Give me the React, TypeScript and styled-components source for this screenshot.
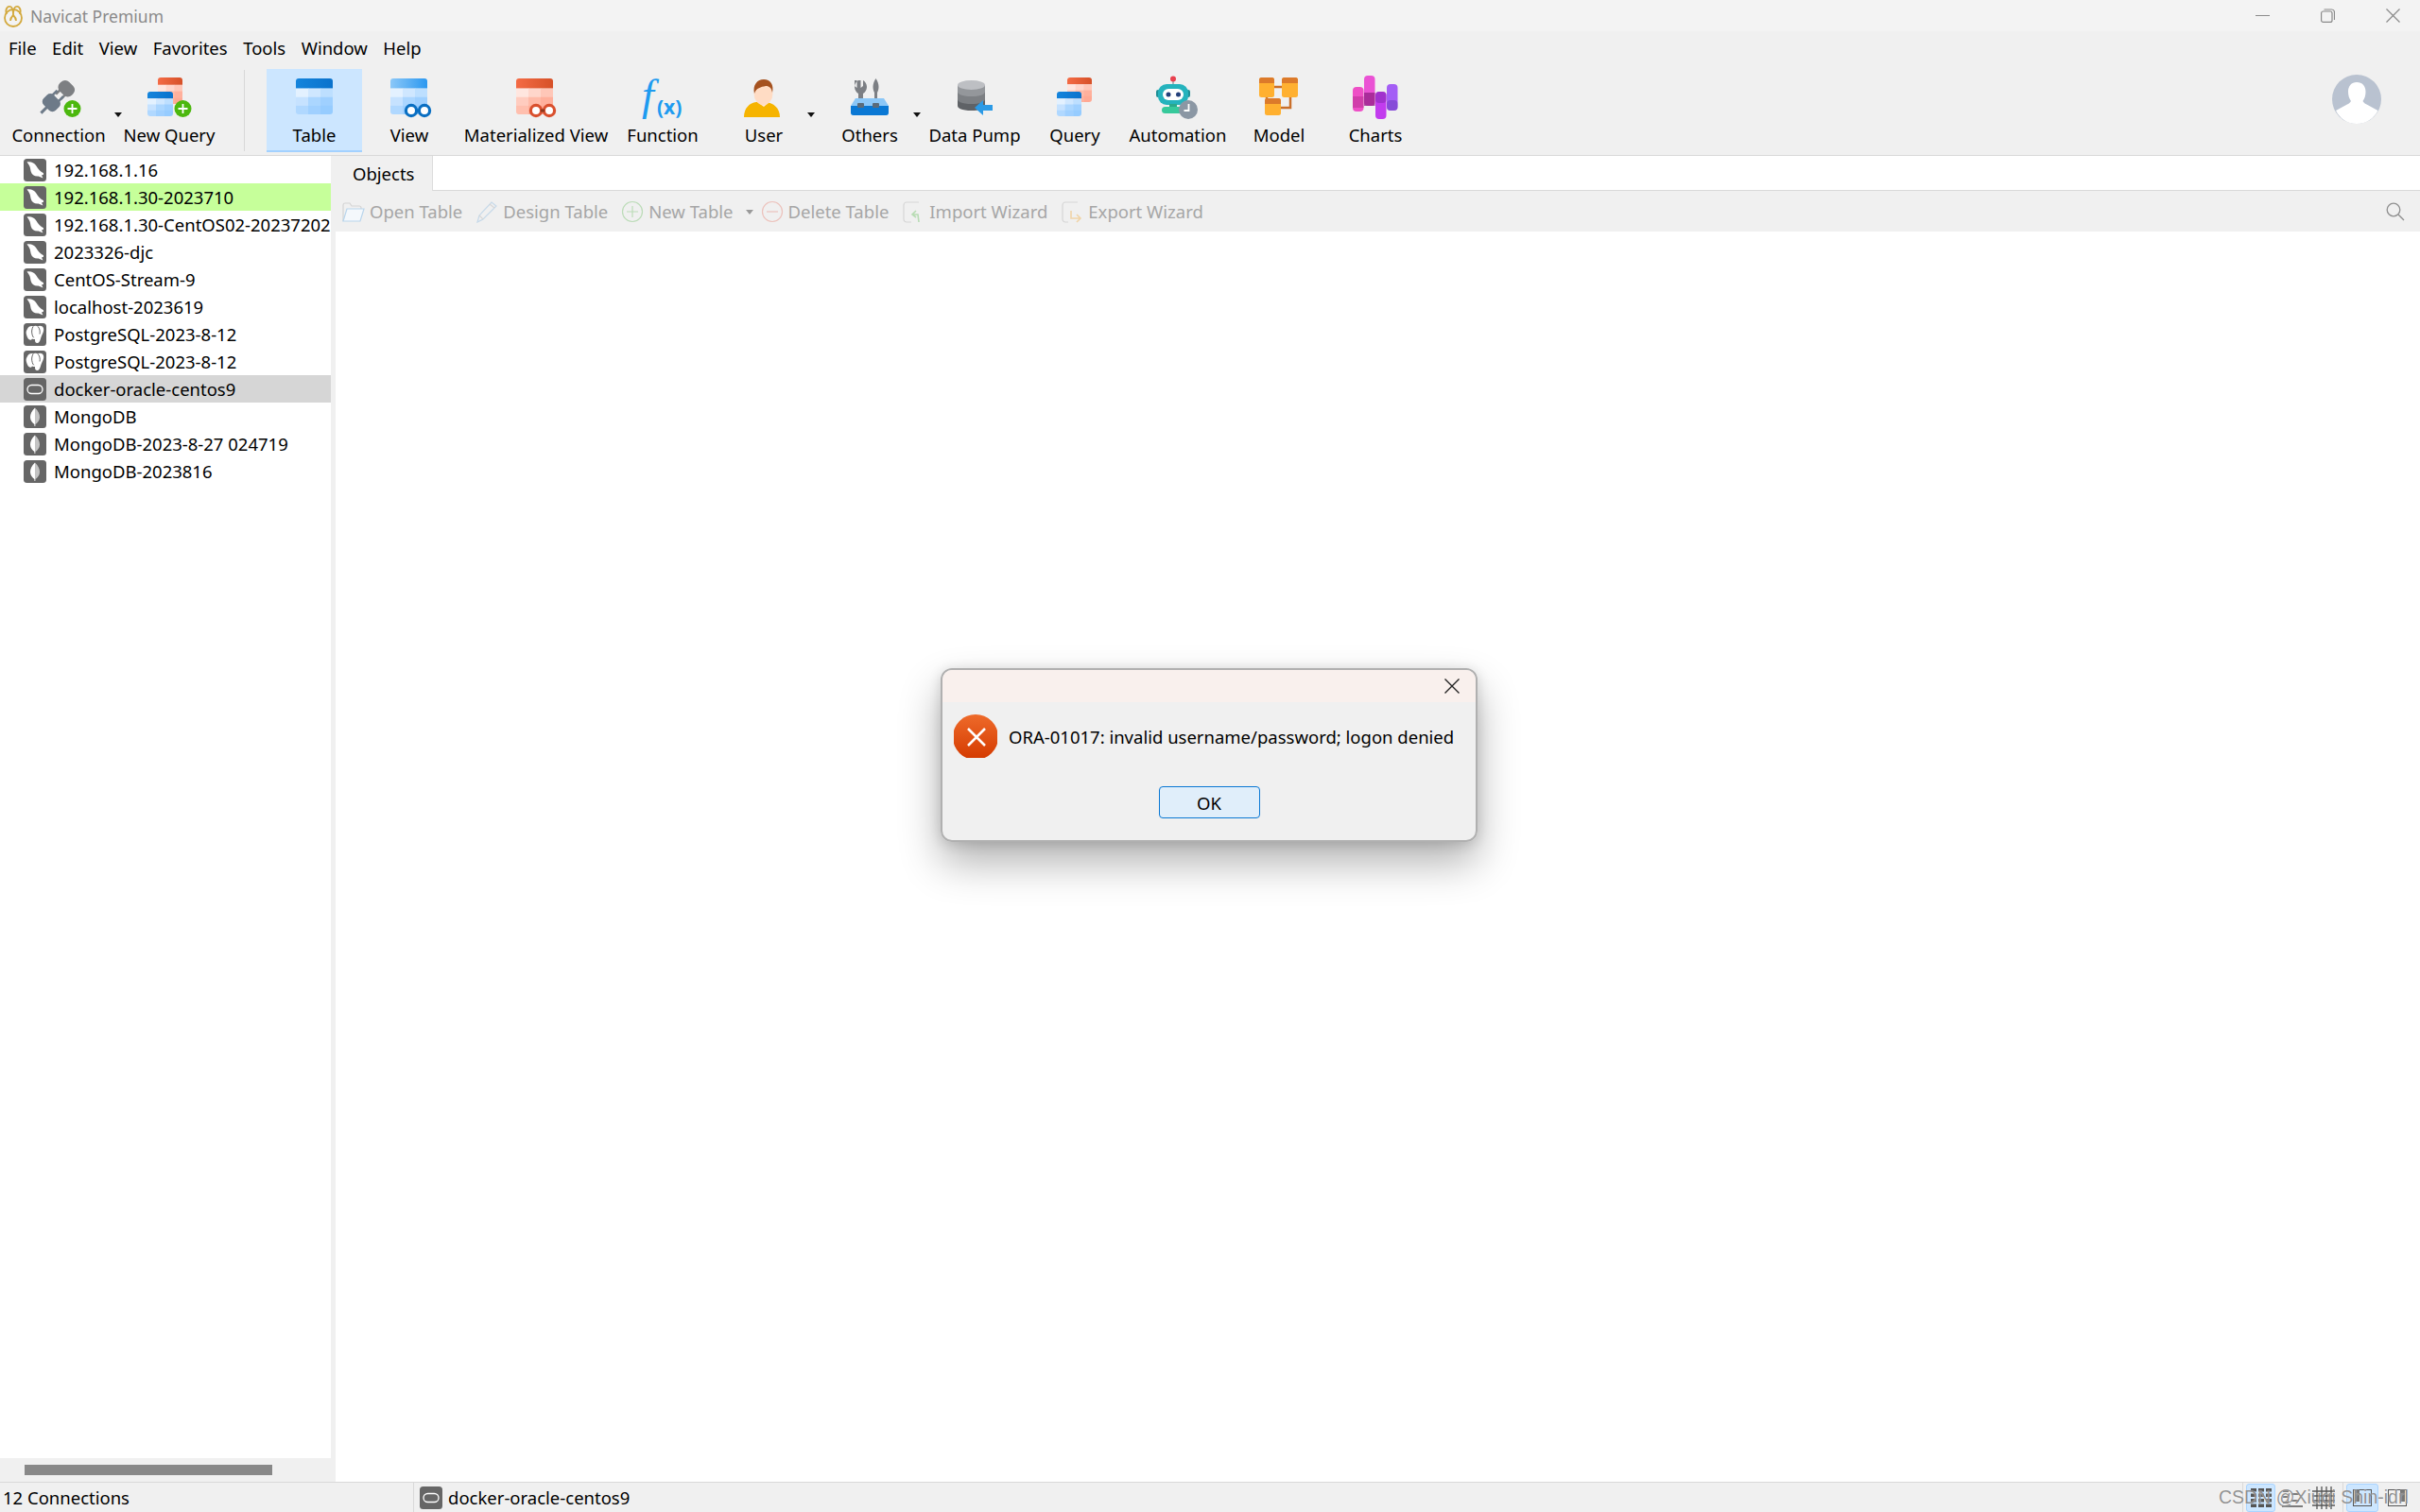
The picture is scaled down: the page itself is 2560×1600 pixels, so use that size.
import React, { useId } from 'react'
import styled, { createGlobalStyle } from 'styled-components'

const GlobalStyle = createGlobalStyle`
    html, body {
        margin: 0;
        padding: 0;
        background: #fff;
    }
    * {
        box-sizing: border-box;
    }
`

const Page = styled.div`
    position: relative;
    width: 2560px;
    height: 1600px;
    display: flex;
    flex-direction: column;
    overflow: hidden;
    background: #f0f0f0;
    color: #000;
    font-family: "Noto Sans", "Open Sans", sans-serif;
    font-size: 18.5px;
`

const TitleBar = styled.div`
    height: 33px;
    flex: none;
    display: flex;
    align-items: center;
    background: #f3f3f3;
    padding-left: 3px;
`

const AppTitle = styled.span`
    margin-left: 7px;
    color: #8a8a8a;
    font-size: 17.5px;
`

const WindowControls = styled.div`
    margin-left: auto;
    display: flex;
    align-items: center;
    padding-right: 21px;
    gap: 54px;
    svg {
        display: block;
    }
`

const MenuBar = styled.div`
    height: 35px;
    flex: none;
    display: flex;
    align-items: center;
    gap: 16.5px;
    padding-left: 9px;
`

const Toolbar = styled.div`
    height: 97px;
    flex: none;
    display: flex;
    align-items: flex-start;
    padding: 5px 0 0 8px;
    border-bottom: 1px solid #d9d9d9;
`

const ToolItem = styled.div<{ $w: number; $active?: boolean }>`
    position: relative;
    width: ${(p) => p.$w}px;
    height: 88px;
    flex: none;
    display: flex;
    flex-direction: column;
    align-items: center;
    padding-top: 7px;
    background: ${(p) => (p.$active ? '#cce6ff' : 'transparent')};
    border-bottom: 2px solid ${(p) => (p.$active ? '#a3d1ff' : 'transparent')};
    svg {
        display: block;
        flex: none;
    }
`

const ToolLabel = styled.span`
    margin-top: 3px;
    line-height: 24px;
    white-space: nowrap;
`

const ToolCaret = styled.i<{ $right: number }>`
    position: absolute;
    right: ${(p) => p.$right}px;
    top: 46px;
    width: 0;
    height: 0;
    border-left: 4px solid transparent;
    border-right: 4px solid transparent;
    border-top: 5px solid #111;
`

const ToolSeparator = styled.div`
    width: 1px;
    height: 86px;
    flex: none;
    margin: 1px 23px 0 16px;
    background: #d8d8d8;
`

const Avatar = styled.div`
    margin-left: auto;
    margin-right: 40px;
    margin-top: 5px;
    svg {
        display: block;
    }
`

const Body = styled.div`
    flex: 1;
    min-height: 0;
    display: flex;
`

const Sidebar = styled.div`
    width: 350px;
    flex: none;
    display: flex;
    flex-direction: column;
    background: #fff;
`

const ConnectionList = styled.div`
    flex: 1;
    min-height: 0;
    overflow: hidden;
`

const ConnectionRow = styled.div<{ $bg?: string }>`
    height: 29px;
    display: flex;
    align-items: center;
    gap: 8px;
    padding-left: 25px;
    white-space: nowrap;
    overflow: hidden;
    background: ${(p) => p.$bg || 'transparent'};
    svg {
        display: block;
        flex: none;
    }
`

const ScrollTrack = styled.div`
    height: 25px;
    flex: none;
    padding: 7px 0 0 26px;
    background: #f0f0f0;
`

const ScrollThumb = styled.div`
    width: 262px;
    height: 11px;
    background: #888;
`

const Main = styled.div`
    flex: 1;
    min-width: 0;
    display: flex;
    flex-direction: column;
    margin-left: 5px;
    background: #fff;
`

const TabRow = styled.div`
    height: 37px;
    flex: none;
    display: flex;
    border-bottom: 1px solid #d9d9d9;
    margin-left: -5px;
`

const Tab = styled.div`
    width: 108px;
    display: flex;
    align-items: center;
    padding-left: 23px;
    background: #f0f0f0;
    border-right: 1px solid #dcdcdc;
    margin-bottom: -1px;
`

const ActionBar = styled.div`
    height: 43px;
    flex: none;
    display: flex;
    align-items: center;
    gap: 14px;
    padding: 0 16px 0 7px;
    background: #f0f0f0;
    color: #a6a6a6;
    margin-left: 0;
`

const ActionButton = styled.div`
    display: flex;
    align-items: center;
    gap: 5px;
    white-space: nowrap;
    svg {
        display: block;
        flex: none;
    }
`

const ActionCaret = styled.i`
    width: 0;
    height: 0;
    margin: 2px -6px 0 8px;
    border-left: 4px solid transparent;
    border-right: 4px solid transparent;
    border-top: 5px solid #9a9a9a;
`

const SearchButton = styled.div`
    margin-left: auto;
    svg {
        display: block;
    }
`

const Content = styled.div`
    flex: 1;
    background: #fff;
`

const StatusBar = styled.div`
    height: 32px;
    flex: none;
    display: flex;
    align-items: center;
    border-top: 1px solid #d9d9d9;
    background: #f0f0f0;
    padding-left: 3px;
`

const StatusCount = styled.div`
    width: 434px;
    flex: none;
`

const StatusConnection = styled.div`
    height: 100%;
    display: flex;
    align-items: center;
    gap: 6px;
    padding-left: 6px;
    border-left: 1px solid #d9d9d9;
    svg {
        display: block;
    }
`

const ViewSwitch = styled.div`
    height: 100%;
    margin-left: auto;
    display: flex;
    align-items: center;
    padding-right: 4px;
`

const SwitchGroup = styled.div`
    height: 100%;
    display: flex;
    align-items: center;
    gap: 5px;
    padding: 0 5px 0 3px;
    border-left: 1px solid #d9d9d9;
`

const SwitchButton = styled.div<{ $active?: boolean; $w: number }>`
    width: ${(p) => p.$w}px;
    height: 30px;
    display: flex;
    align-items: center;
    justify-content: center;
    border-radius: 3px;
    background: ${(p) => (p.$active ? '#cce6ff' : 'transparent')};
    border: 1px solid ${(p) => (p.$active ? '#a9d4ff' : 'transparent')};
    svg {
        display: block;
    }
`

const Watermark = styled.div`
    position: absolute;
    left: 2347px;
    top: 1572px;
    color: rgba(110, 110, 110, 0.75);
    font-family: "Liberation Sans", Arial, sans-serif;
    font-size: 19.5px;
    line-height: 24px;
    white-space: nowrap;
    text-shadow: 0 0 1px rgba(255, 255, 255, 0.8);
`

const Dialog = styled.div`
    position: absolute;
    left: 995px;
    top: 707px;
    width: 568px;
    height: 184px;
    display: flex;
    flex-direction: column;
    background: #f0f0f0;
    border: 2px solid #b0b0b0;
    border-radius: 12px;
    overflow: hidden;
`

const DialogShadow = styled.div`
    position: absolute;
    left: 995px;
    top: 707px;
    width: 568px;
    height: 184px;
    border-radius: 12px;
    box-shadow: 0 22px 44px rgba(0, 0, 0, 0.3), 0 2px 14px rgba(0, 0, 0, 0.14);
`

const DialogHeader = styled.div`
    height: 34px;
    flex: none;
    display: flex;
    justify-content: flex-end;
    align-items: center;
    padding-right: 17px;
    background: #f9f0ed;
    svg {
        display: block;
    }
`

const DialogMessage = styled.div`
    display: flex;
    align-items: center;
    gap: 12px;
    margin-top: 13px;
    padding-left: 12px;
    white-space: nowrap;
    font-size: 18.5px;
    svg {
        display: block;
        flex: none;
    }
`

const DialogFooter = styled.div`
    display: flex;
    justify-content: center;
    margin-top: 30px;
`

const OkButton = styled.div`
    width: 107px;
    height: 34px;
    display: flex;
    align-items: center;
    justify-content: center;
    border: 1.5px solid #0a78d4;
    border-radius: 4px;
    background: #e0eefa;
`

type GridProps = { x: number; y: number; w: number; h: number; kind: 'blue' | 'red' | 'sky' }

const gridColors = {
    blue: {
        head: ['#1484dc', '#0a72cc'],
        cells: ['#e3f1ff', '#cfe7ff', '#bddfff', '#c6e2ff', '#abd6ff', '#9fd0ff', '#b0d8ff', '#a0d0ff', '#96ccff'],
    },
    sky: {
        head: ['#8cc8f8', '#2b98f0'],
        cells: ['#e3f1ff', '#cfe7ff', '#bddfff', '#c6e2ff', '#abd6ff', '#9fd0ff', '#b0d8ff', '#a0d0ff', '#96ccff'],
    },
    red: {
        head: ['#f46b45', '#d65128'],
        cells: ['#ffe6df', '#ffd6cb', '#ffc7b8', '#ffccbf', '#ffbaa8', '#ffb09c', '#ffbfae', '#ffb19d', '#ffa994'],
    },
}

const Grid = ({ x, y, w, h, kind }: GridProps) => {
    const id = useId()
    const c = gridColors[kind]
    const headH = h * 0.28
    const cellW = w / 3
    const cellH = (h - headH) / 3
    return (
        <g>
            <defs>
                <clipPath id={id + 'c'}>
                    <rect x={x} y={y} width={w} height={h} rx={3} />
                </clipPath>
                <linearGradient id={id + 'g'} x1="0" y1="0" x2="1" y2="0">
                    <stop offset="0" stopColor={c.head[0]} />
                    <stop offset="1" stopColor={c.head[1]} />
                </linearGradient>
            </defs>
            <g clipPath={`url(#${id}c)`}>
                <rect x={x} y={y} width={w} height={headH} fill={`url(#${id}g)`} />
                {c.cells.map((fill, i) => (
                    <rect
                        key={i}
                        x={x + (i % 3) * cellW}
                        y={y + headH + Math.floor(i / 3) * cellH}
                        width={cellW + 0.5}
                        height={cellH + 0.5}
                        fill={fill}
                    />
                ))}
            </g>
        </g>
    )
}

const Icon48 = ({ children }: { children: React.ReactNode }) => (
    <svg width="48" height="48" viewBox="0 0 48 48">
        {children}
    </svg>
)

const GreenPlus = () => (
    <g>
        <circle cx="38.5" cy="35" r="9" fill="#4cb80e" />
        <path d="M38.5 30v10M33.5 35h10" stroke="#fff" strokeWidth="1.8" />
    </g>
)

const ConnectionIcon = () => (
    <Icon48>
        <g transform="rotate(45 33 13)">
            <rect x="24" y="7" width="18" height="14" rx="6" fill="#7d7f82" />
            <rect x="28" y="20" width="2.5" height="6" fill="#7d7f82" />
            <rect x="35.5" y="20" width="2.5" height="6" fill="#7d7f82" />
        </g>
        <g transform="rotate(45 16 29)">
            <rect x="7" y="21" width="18" height="15" rx="5" fill="#6d7a88" />
            <rect x="10" y="15" width="2.5" height="7" fill="#6d7a88" />
            <rect x="19" y="15" width="2.5" height="7" fill="#6d7a88" />
            <rect x="14.5" y="35" width="3" height="9" fill="#6d7a88" />
        </g>
        <GreenPlus />
    </Icon48>
)

const NewQueryIcon = () => (
    <Icon48>
        <Grid x={12} y={2} w={26} h={28} kind="red" />
        <Grid x={1} y={17} w={27} h={26} kind="blue" />
        <GreenPlus />
    </Icon48>
)

const TableIcon = () => (
    <Icon48>
        <Grid x={4} y={3} w={39} h={38} kind="blue" />
    </Icon48>
)

const ViewIcon = () => (
    <Icon48>
        <Grid x={4} y={3} w={39} h={38} kind="sky" />
        <g fill="#fff" stroke="#0a6fc2" strokeWidth="3.2">
            <circle cx="26" cy="37" r="5.6" />
            <circle cx="40" cy="37" r="5.6" />
        </g>
        <path d="M31 37h4" stroke="#0a6fc2" strokeWidth="3" />
    </Icon48>
)

const MaterializedIcon = () => (
    <Icon48>
        <Grid x={3} y={3} w={39} h={38} kind="red" />
        <g fill="#fff" stroke="#d9502e" strokeWidth="3.2">
            <circle cx="24" cy="37" r="5.6" />
            <circle cx="38" cy="37" r="5.6" />
        </g>
        <path d="M29 37h4" stroke="#8a3a20" strokeWidth="3" />
    </Icon48>
)

const FunctionIcon = () => (
    <Icon48>
        <text x="2" y="36" fill="#1e9bf0" fontFamily="'Liberation Serif', serif" fontStyle="italic" fontSize="46">
            f
        </text>
        <text x="18" y="41" fill="#1e9bf0" fontFamily="'Noto Sans', sans-serif" fontWeight="700" fontSize="21">
            (x)
        </text>
    </Icon48>
)

const UserIcon = () => (
    <Icon48>
        <path d="M3 44c0-10 6-15 13-16h10c8 1 15 6 15 16z" fill="#f6b400" />
        <path d="M17 28l7 5 6-5-2-3h-9z" fill="#ffe7d6" />
        <ellipse cx="23.5" cy="19" rx="10" ry="12" fill="#ffdcc4" />
        <path d="M14 19c-2-9 3-15 10-15s11 6 9 14c-1-5-3-7-7-7-5 1-10 2-12 8z" fill="#a5521f" />
    </Icon48>
)

const OthersIcon = () => (
    <Icon48>
        <path
            d="M8 5v6l2.5 2v-8h4v8l2.500-2V5c2 1 4 4 4 7 0 3-2 6-4 7v12h-5V19c-2-1-4-4-4-7 0-3 2-6 4-7z"
            fill="#7c7f84"
        />
        <path d="M30.500 3c2 3 3 6 3 9 0 3-1 5-1.500 6v13h-3V18c-.5-1-1.500-3-1.500-6 0-3 1-6 3-9z" fill="#7c7f84" />
        <path d="M9 24h30l5 8v7a3 3 0 0 1-3 3H7a3 3 0 0 1-3-3v-7z" fill="#8cc7f7" />
        <path d="M4 32h40v7a3 3 0 0 1-3 3H7a3 3 0 0 1-3-3z" fill="#0a78d4" />
        <rect x="11" y="29" width="7" height="5" rx="1" fill="#5b6b7a" />
        <rect x="27" y="29" width="7" height="5" rx="1" fill="#5b6b7a" />
    </Icon48>
)

const DataPumpIcon = () => (
    <Icon48>
        <path d="M6 10v22c0 3 6 5 14.500 5S35 35 35 32V10z" fill="#5f6266" />
        <path d="M6 10v15c0 3 6 5 14.500 5S35 28 35 25V10z" fill="#7c7f83" />
        <path d="M6 10v7c0 3 6 5 14.500 5S35 20 35 17v-7z" fill="#94979b" />
        <ellipse cx="20.500" cy="10" rx="14.500" ry="5" fill="#bdbfc3" />
        <path d="M24 34l9-8v5h10v6H33v5z" fill="#2b9ae6" />
    </Icon48>
)

const QueryIcon = () => (
    <Icon48>
        <Grid x={16} y={2} w={26} h={26} kind="red" />
        <Grid x={5} y={17} w={26} h={26} kind="blue" />
    </Icon48>
)

const AutomationIcon = () => (
    <Icon48>
        <path d="M19 4v6" stroke="#9aa3ad" strokeWidth="1.500" />
        <circle cx="19" cy="3.500" r="3" fill="#e8414f" />
        <rect x="1" y="15" width="4" height="8" rx="2" fill="#1f8f96" />
        <rect x="33" y="15" width="4" height="8" rx="2" fill="#1f8f96" />
        <rect x="3" y="9" width="32" height="22" rx="9" fill="#25b3bd" />
        <rect x="8" y="14" width="22" height="12" rx="6" fill="#fff" />
        <circle cx="14" cy="20" r="2.500" fill="#24407a" />
        <circle cx="24.500" cy="20" r="2.500" fill="#24407a" />
        <rect x="15" y="30" width="8" height="4" fill="#2aa98b" />
        <rect x="7" y="33" width="24" height="7" rx="3.500" fill="#37c99b" />
        <circle cx="35" cy="36" r="10" fill="#8b97a4" />
        <path d="M35.500 30v7h-5" fill="none" stroke="#fff" strokeWidth="1.800" />
    </Icon48>
)

const ModelIcon = () => (
    <Icon48>
        <path d="M19 12h8M11 23v2M36 23v11H26" fill="none" stroke="#c96f2a" strokeWidth="2.500" />
        {[
            [3, 2, 16, 21],
            [27, 2, 17, 21],
            [9, 24, 17, 18],
        ].map(([x, y, w, h]) => (
            <g key={x}>
                <rect x={x} y={y} width={w} height={h} rx={2.500} fill="#ffb030" />
                <path
                    d={`M${x} ${y + 6}v-3.500a2.500 2.500 0 0 1 2.500-2.500h${w - 5}a2.500 2.500 0 0 1 2.500 2.500v3.500z`}
                    fill="#dc7a2a"
                />
            </g>
        ))}
    </Icon48>
)

const ChartsIcon = () => (
    <Icon48>
        <rect x="0" y="12" width="11.500" height="26" rx="4" fill="#ee4fc6" />
        <rect x="12" y="0" width="11.500" height="32" rx="4" fill="#ea52d4" />
        <rect x="24" y="17" width="11.500" height="29" rx="4" fill="#c23cee" />
        <rect x="36" y="9" width="11.500" height="28" rx="4" fill="#a45ef5" />
        <rect x="0" y="22" width="11.500" height="12" fill="#b92f94" opacity="0.55" />
        <rect x="12" y="18" width="11.500" height="14" fill="#8f1d82" opacity="0.7" />
        <rect x="24" y="17" width="11.500" height="12" rx="4" fill="#8a2bb8" opacity="0.6" />
        <rect x="36" y="26" width="11.500" height="11" rx="4" fill="#6f3cc0" opacity="0.55" />
    </Icon48>
)

const ToolIconBox = styled.div`
    height: 48px;
    flex: none;
`

type DbKind = 'mysql' | 'postgres' | 'oracle' | 'mongo'

const DbIcon = ({ kind }: { kind: DbKind }) => (
    <svg width="24" height="24" viewBox="0 0 24 24">
        <rect width="24" height="24" rx="3.500" fill="#666" />
        {kind === 'mysql' && (
            <path
                d="M3.500 3.500C8 2.800 11.500 4.600 13.500 7.800c1.800 3 4 5.800 7.500 7.500v1.500l-2 .6 1.500 3.200-4.800-2.200c-4 .4-7-1.300-8-5-.6-2.200-.5-4.400-1.700-6.200C5.300 5.600 4.500 4.800 3.500 3.500z"
                fill="#fff"
            />
        )}
        {kind === 'postgres' && (
            <g>
                <path
                    d="M4 6c1-2.500 3.500-3.500 6-2.800C11.500 2.500 13.500 2.500 15 3.200c2-1 5-.6 6 2 .8 2.500-.5 5-1.500 7-.8 1.500-1 3-1.800 5-.5 1.500-1.500 4-3.700 3.800-1.800-.2-2-2-2-4-1 .2-2 0-3-.6-.5 1-1.500 1.600-2.800 1.200-2-1-3-4.500-3.500-6.600C2.300 8.500 3.400 7.200 4 6z"
                    fill="#fff"
                />
                <path d="M10 3.500c-1.500 3-1.800 6-.8 9 .3 1 .6 2 1.500 2.800M15 3.500c2 2 2.600 5 2 8" fill="none" stroke="#666" strokeWidth="1" />
            </g>
        )}
        {kind === 'oracle' && <rect x="4" y="7.500" width="16" height="9" rx="4.500" fill="none" stroke="#fff" strokeWidth="1.300" />}
        {kind === 'mongo' && (
            <g>
                <path d="M12 2.500C8.500 6 7 9 7 12.500s2.500 6 4.400 7.500l.1 2h.5z" fill="#fff" />
                <path d="M12 2.500c3.500 3.500 5 6.500 5 10s-2.500 6-4.400 7.500l-.1 2H12z" fill="#c4c4c4" />
            </g>
        )}
    </svg>
)

const connections: { name: string; kind: DbKind; bg?: string }[] = [
    { name: '192.168.1.16', kind: 'mysql' },
    { name: '192.168.1.30-2023710', kind: 'mysql', bg: '#c6ff9a' },
    { name: '192.168.1.30-CentOS02-20237202', kind: 'mysql' },
    { name: '2023326-djc', kind: 'mysql' },
    { name: 'CentOS-Stream-9', kind: 'mysql' },
    { name: 'localhost-2023619', kind: 'mysql' },
    { name: 'PostgreSQL-2023-8-12', kind: 'postgres' },
    { name: 'PostgreSQL-2023-8-12', kind: 'postgres' },
    { name: 'docker-oracle-centos9', kind: 'oracle', bg: '#d6d6d6' },
    { name: 'MongoDB', kind: 'mongo' },
    { name: 'MongoDB-2023-8-27 024719', kind: 'mongo' },
    { name: 'MongoDB-2023816', kind: 'mongo' },
]

const tools: { label: string; w: number; icon: React.ReactNode; caret?: number; active?: boolean }[] = [
    { label: 'Table', w: 101, icon: <TableIcon />, active: true },
    { label: 'View', w: 100, icon: <ViewIcon /> },
    { label: 'Materialized View', w: 168, icon: <MaterializedIcon /> },
    { label: 'Function', w: 100, icon: <FunctionIcon /> },
    { label: 'User', w: 114, icon: <UserIcon />, caret: 3 },
    { label: 'Others', w: 110, icon: <OthersIcon />, caret: 1 },
    { label: 'Data Pump', w: 112, icon: <DataPumpIcon /> },
    { label: 'Query', w: 100, icon: <QueryIcon /> },
    { label: 'Automation', w: 118, icon: <AutomationIcon /> },
    { label: 'Model', w: 96, icon: <ModelIcon /> },
    { label: 'Charts', w: 108, icon: <ChartsIcon /> },
]

const ActionIcon = ({ children }: { children: React.ReactNode }) => (
    <svg width="24" height="24" viewBox="0 0 24 24" fill="none" strokeWidth="1.200">
        {children}
    </svg>
)

const actions: { label: string; icon: React.ReactNode; caret?: boolean }[] = [
    {
        label: 'Open Table',
        icon: (
            <ActionIcon>
                <path d="M1 22V5a2 2 0 0 1 2-2h5l2 3h8a2 2 0 0 1 2 2v1" stroke="#d4d4d4" />
                <path d="M1 22l4-13h18l-4 13z" stroke="#b9d5ec" fill="#f4f8fc" />
            </ActionIcon>
        ),
    },
    {
        label: 'Design Table',
        icon: (
            <ActionIcon>
                <path d="M2 23l2-7L17 2l5 4L8 20z" stroke="#c6d9e9" />
                <path d="M4 16l4 4M15 4l5 4" stroke="#d6d6d6" />
            </ActionIcon>
        ),
    },
    {
        label: 'New Table',
        caret: true,
        icon: (
            <ActionIcon>
                <circle cx="12" cy="12" r="10.500" stroke="#bcdcb8" />
                <path d="M12 6v12M6 12h12" stroke="#bcdcb8" />
            </ActionIcon>
        ),
    },
    {
        label: 'Delete Table',
        icon: (
            <ActionIcon>
                <circle cx="12" cy="12" r="10.500" stroke="#ecc2bc" />
                <path d="M6 12h12" stroke="#ecc2bc" />
            </ActionIcon>
        ),
    },
    {
        label: 'Import Wizard',
        icon: (
            <ActionIcon>
                <path d="M10 23H5a3 3 0 0 1-3-3V5a3 3 0 0 1 3-3h13" stroke="#d6d6d6" />
                <path d="M18 23l-1-8h-5M15 11l-4 4 4 3" stroke="#b8dcb4" strokeWidth="1.600" />
            </ActionIcon>
        ),
    },
    {
        label: 'Export Wizard',
        icon: (
            <ActionIcon>
                <path d="M8 23H5a3 3 0 0 1-3-3V5a3 3 0 0 1 3-3h13" stroke="#d6d6d6" />
                <path d="M11 11v8h9M17 15l4 4-4 4" stroke="#f0d4a8" strokeWidth="1.600" />
            </ActionIcon>
        ),
    },
]

const ThickGrid = () => (
    <svg width="22" height="20" viewBox="0 0 22 20" fill="#555">
        {[0, 1, 2, 3].flatMap((r) =>
            [0, 1, 2].map((c) => <rect key={`${r}${c}`} x={c * 8} y={r * 5.500} width="6" height="3.500" />)
        )}
    </svg>
)

const ListLines = () => (
    <svg width="22" height="20" viewBox="0 0 22 20" stroke="#555" strokeWidth="1.500" fill="none">
        <path d="M1 3h6M1 9h5M1 15h6M0 19h22M10 6h8M10 13h8" />
    </svg>
)

const ThinGrid = () => (
    <svg width="24" height="24" viewBox="0 0 24 24" stroke="#555" strokeWidth="1.300" fill="none">
        <path d="M0 5h24M0 10h24M0 15h24M0 20h24M5 0v24M10 0v24M15 0v24M20 0v24" />
    </svg>
)

const PaneIcon = ({ side }: { side: 'left' | 'right' }) => (
    <svg width="20" height="18" viewBox="0 0 20 18">
        <rect x="0.500" y="0.500" width="19" height="17" fill="none" stroke="#555" />
        <rect x={side === 'left' ? 2 : 13} y="0" width="5" height="13" fill="#777" />
    </svg>
)

export default function App() {
    return (
        <Page>
            <GlobalStyle />
            <TitleBar>
                <svg width="22" height="24" viewBox="0 0 22 24" fill="none" stroke="#d3a93d" strokeWidth="1.800">
                    <circle cx="11" cy="14" r="9" />
                    <path d="M4 10C2 5 5 1 8 2c3 1 3 6 3 9 0-3 0-8 3-9 3-1 6 3 4 8" />
                    <path d="M11 11c-2 2-3 4-3 6M11 11c2 2 3 4 3 6" />
                </svg>
                <AppTitle>Navicat Premium</AppTitle>
                <WindowControls>
                    <svg width="15" height="15" viewBox="0 0 15 15" stroke="#8a8a8a" fill="none" strokeWidth="1">
                        <path d="M0 7.500h15" />
                    </svg>
                    <svg width="15" height="15" viewBox="0 0 15 15" stroke="#8a8a8a" fill="none" strokeWidth="1.200">
                        <rect x="0.600" y="3" width="11.400" height="11.400" rx="2" />
                        <path d="M3.500 1h8a3 3 0 0 1 3 3v8" />
                    </svg>
                    <svg width="15" height="15" viewBox="0 0 15 15" stroke="#8a8a8a" fill="none" strokeWidth="1.200">
                        <path d="M0.500 0.500l14 14M14.500 0.500l-14 14" />
                    </svg>
                </WindowControls>
            </TitleBar>
            <MenuBar>
                {['File', 'Edit', 'View', 'Favorites', 'Tools', 'Window', 'Help'].map((m) => (
                    <span key={m}>{m}</span>
                ))}
            </MenuBar>
            <Toolbar>
                <ToolItem $w={108}>
                    <ToolIconBox>
                        <ConnectionIcon />
                    </ToolIconBox>
                    <ToolLabel>Connection</ToolLabel>
                    <ToolCaret $right={-13} />
                </ToolItem>
                <ToolItem $w={126}>
                    <ToolIconBox>
                        <NewQueryIcon />
                    </ToolIconBox>
                    <ToolLabel>New Query</ToolLabel>
                </ToolItem>
                <ToolSeparator />
                {tools.map((t) => (
                    <ToolItem key={t.label} $w={t.w} $active={t.active}>
                        <ToolIconBox>{t.icon}</ToolIconBox>
                        <ToolLabel>{t.label}</ToolLabel>
                        {t.caret !== undefined && <ToolCaret $right={t.caret} />}
                    </ToolItem>
                ))}
                <Avatar>
                    <svg width="54" height="54" viewBox="0 0 54 54">
                        <circle cx="27" cy="27" r="26" fill="#b9c2d0" />
                        <path
                            d="M27 9c6 0 9.500 4 9.500 10 0 4-1 7-3 10 1 2 3 3 5 4l11 6c-4 8-12 14-22.500 14S9 47 5 39l11-6c2-1 4-2 5-4-2-3-3-6-3-10 0-6 3.500-10 9-10z"
                            fill="#fff"
                        />
                    </svg>
                </Avatar>
            </Toolbar>
            <Body>
                <Sidebar>
                    <ConnectionList>
                        {connections.map((c, i) => (
                            <ConnectionRow key={i} $bg={c.bg}>
                                <DbIcon kind={c.kind} />
                                {c.name}
                            </ConnectionRow>
                        ))}
                    </ConnectionList>
                    <ScrollTrack>
                        <ScrollThumb />
                    </ScrollTrack>
                </Sidebar>
                <Main>
                    <TabRow>
                        <Tab>Objects</Tab>
                    </TabRow>
                    <ActionBar>
                        {actions.map((a) => (
                            <ActionButton key={a.label}>
                                {a.icon}
                                {a.label}
                                {a.caret && <ActionCaret />}
                            </ActionButton>
                        ))}
                        <SearchButton>
                            <svg width="20" height="20" viewBox="0 0 20 20" fill="none" stroke="#8f8f8f" strokeWidth="1.300">
                                <circle cx="8" cy="8" r="6.800" />
                                <path d="M13 13l6 6" />
                            </svg>
                        </SearchButton>
                    </ActionBar>
                    <Content />
                </Main>
            </Body>
            <StatusBar>
                <StatusCount>12 Connections</StatusCount>
                <StatusConnection>
                    <DbIcon kind="oracle" />
                    docker-oracle-centos9
                </StatusConnection>
                <ViewSwitch>
                    <SwitchGroup>
                        <SwitchButton $w={31} $active>
                            <ThickGrid />
                        </SwitchButton>
                        <SwitchButton $w={26}>
                            <ListLines />
                        </SwitchButton>
                        <SwitchButton $w={30}>
                            <ThinGrid />
                        </SwitchButton>
                    </SwitchGroup>
                    <SwitchGroup>
                        <SwitchButton $w={34} $active>
                            <PaneIcon side="left" />
                        </SwitchButton>
                        <SwitchButton $w={30}>
                            <PaneIcon side="right" />
                        </SwitchButton>
                    </SwitchGroup>
                </ViewSwitch>
            </StatusBar>
            <Watermark>CSDN @Xiuqi Shin-idrl</Watermark>
            <DialogShadow />
            <Dialog>
                <DialogHeader>
                    <svg width="16" height="16" viewBox="0 0 16 16" stroke="#222" fill="none" strokeWidth="1.400">
                        <path d="M0.500 0.500l15 15M15.500 0.500l-15 15" />
                    </svg>
                </DialogHeader>
                <DialogMessage>
                    <svg width="46" height="46" viewBox="0 0 46 46">
                        <defs>
                            <linearGradient id="errorFill" x1="0" y1="0" x2="0" y2="1">
                                <stop offset="0" stopColor="#ee6a2a" />
                                <stop offset="1" stopColor="#d43a00" />
                            </linearGradient>
                        </defs>
                        <circle cx="23" cy="24" r="24" fill="url(#errorFill)" />
                        <path d="M15 15l18 18M33 15L15 33" stroke="#fff" strokeWidth="2.500" />
                    </svg>
                    ORA-01017: invalid username/password; logon denied
                </DialogMessage>
                <DialogFooter>
                    <OkButton>OK</OkButton>
                </DialogFooter>
            </Dialog>
        </Page>
    )
}
